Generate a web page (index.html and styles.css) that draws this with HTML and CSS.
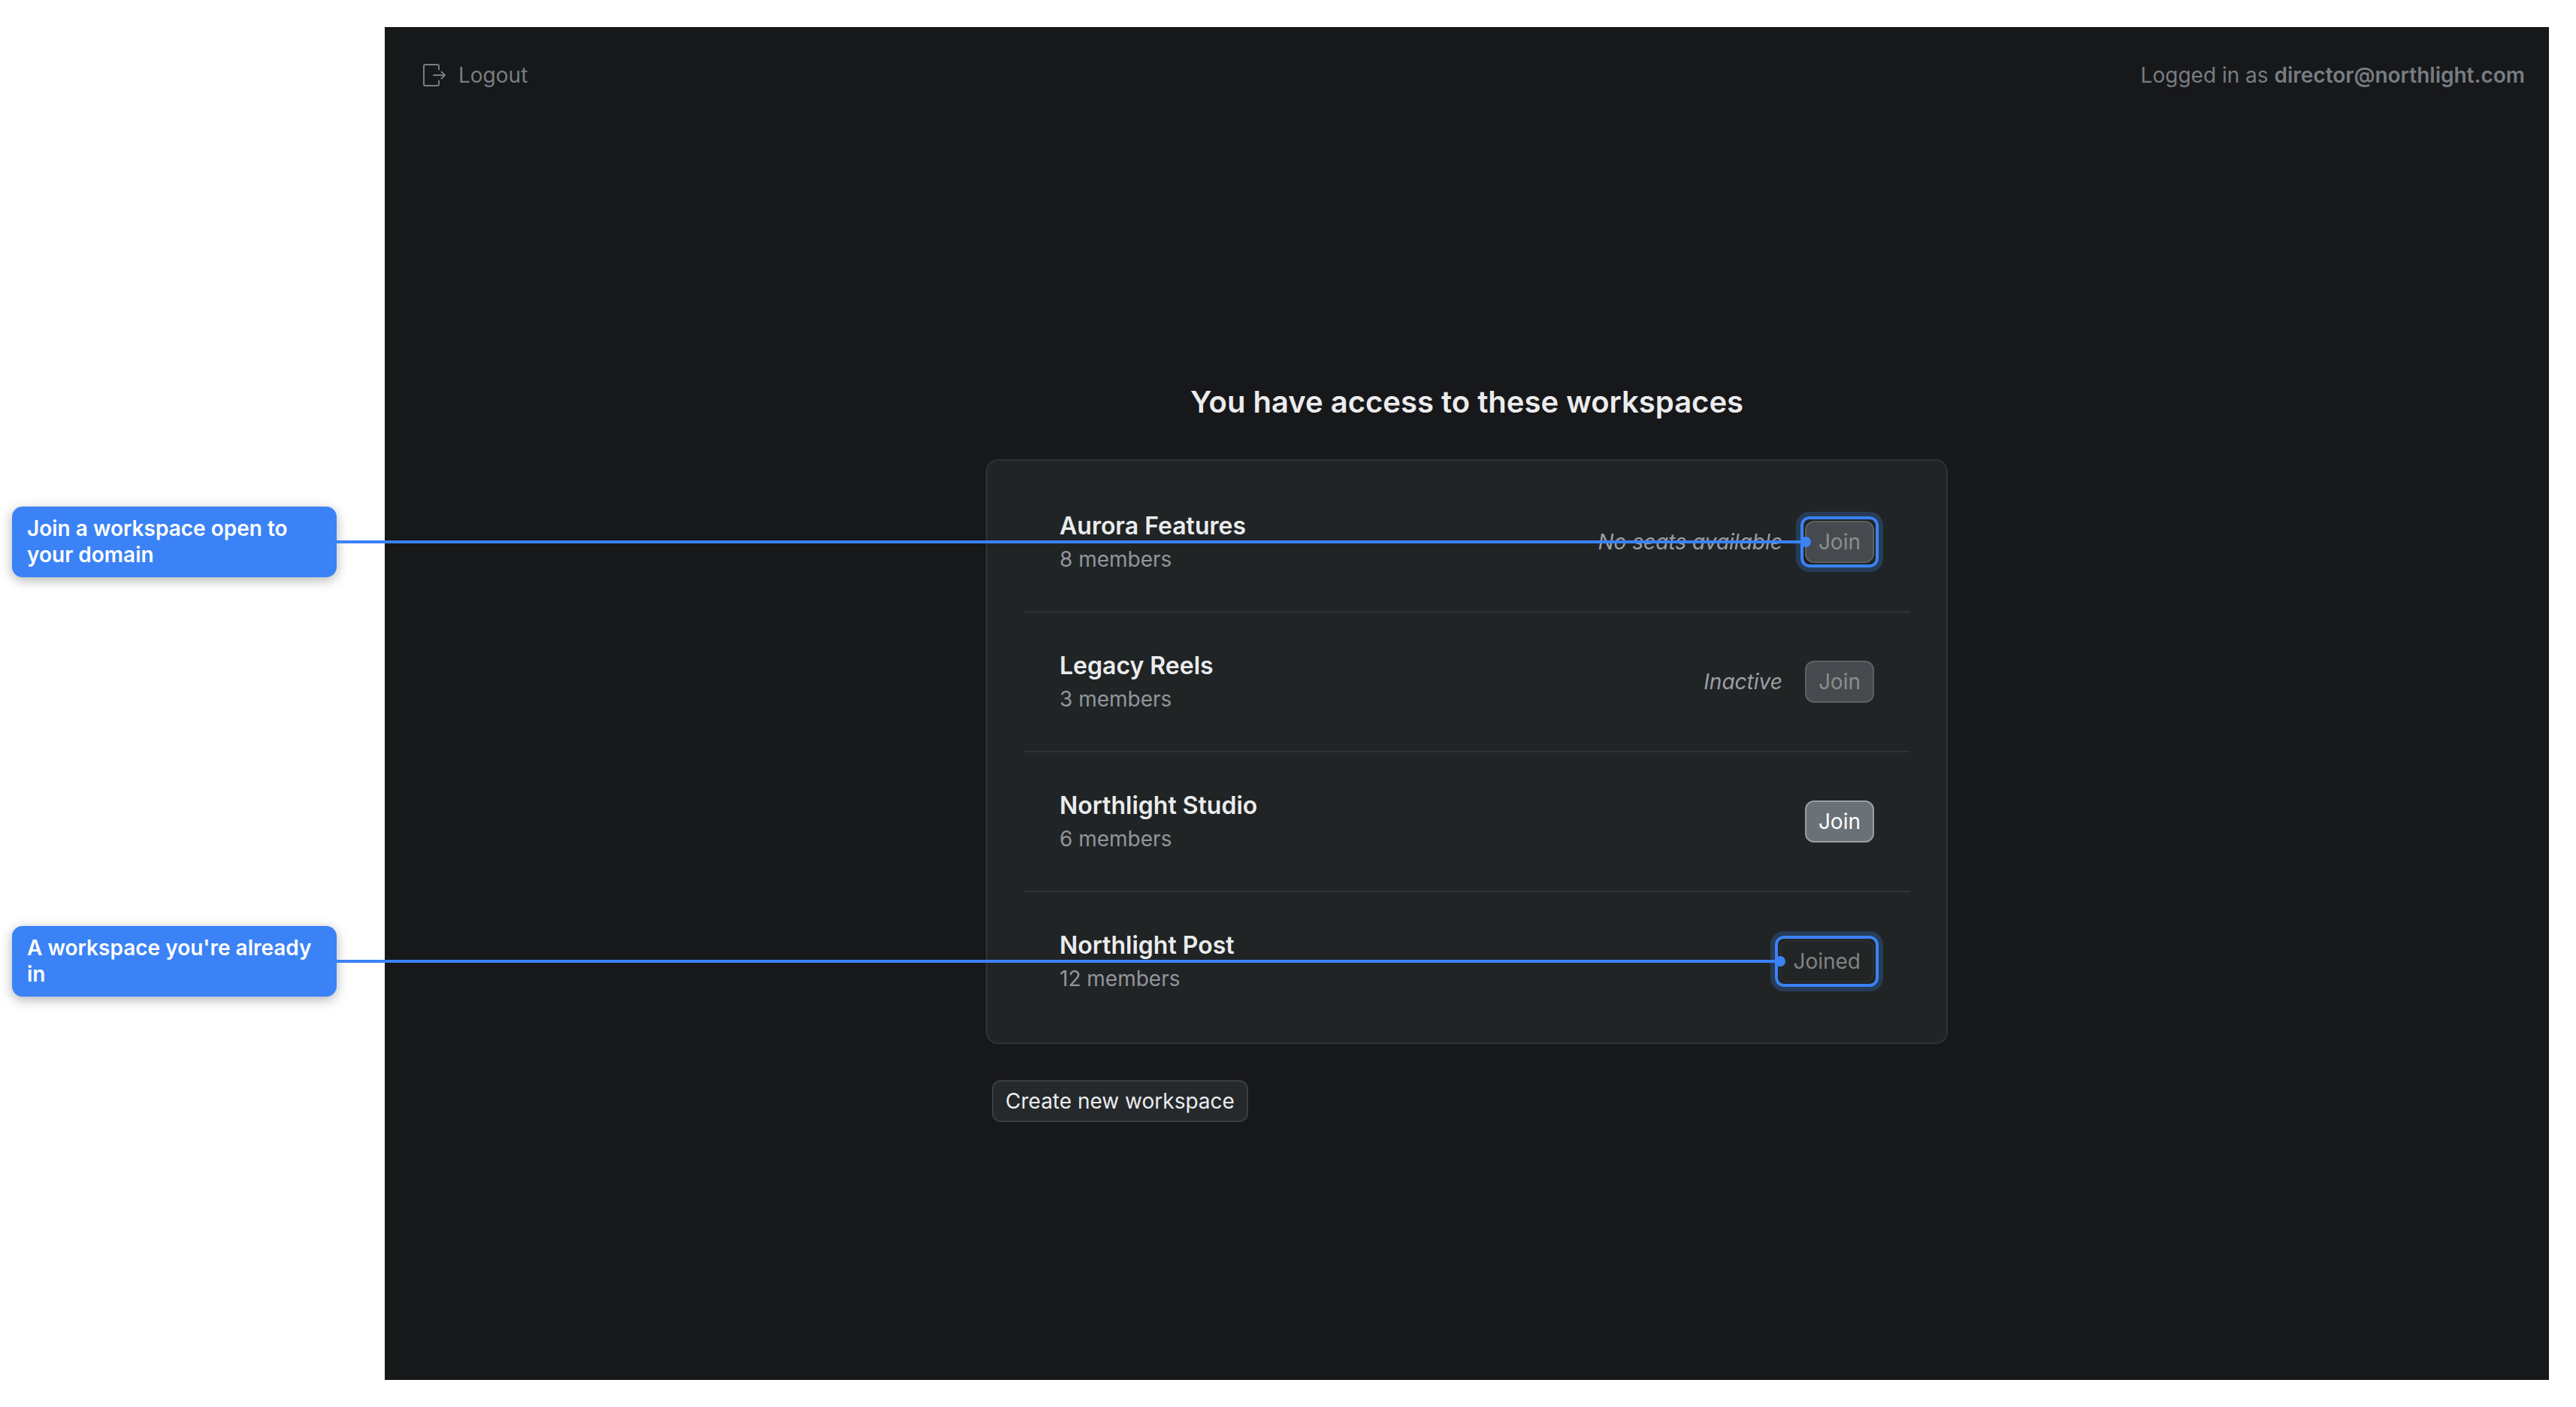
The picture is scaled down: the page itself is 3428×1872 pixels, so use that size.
FILE: index.html
```html
<!DOCTYPE html>
<html lang="en">
<head>
  <meta charset="UTF-8" />
  <meta name="viewport" content="width=device-width, initial-scale=1" />
  <title>Workspaces</title>
  <link rel="stylesheet" href="styles.css">
</head>
<body>

  <div class="app">
    <header class="topbar">
      <button type="button" class="logout">
        <svg class="logout-icon" viewBox="0 0 32 32" aria-hidden="true">
          <path d="M22 8.500V4a2 2 0 0 0-2-2H4a2 2 0 0 0-2 2v24a2 2 0 0 0 2 2h16a2 2 0 0 0 2-2v-4.500" />
          <path d="M15 16h15M25.500 11.500l4.500 4.500-4.500 4.500" />
        </svg>
        Logout
      </button>
      <p class="user">Logged in as <strong>director@northlight.com</strong></p>
    </header>

    <main class="content">
      <h1>You have access to these workspaces</h1>

      <ul class="workspaces">
        <li class="workspace">
          <div class="info">
            <h2>Aurora Features</h2>
            <p>8 members</p>
          </div>
          <em class="status">No seats available</em>
          <button type="button" class="btn btn-join ringed" disabled>Join</button>
          <div class="callout callout-join">
            <span class="callout-label">Join a workspace open to your domain</span>
            <span class="callout-line"></span>
          </div>
        </li>
        <li class="workspace">
          <div class="info">
            <h2>Legacy Reels</h2>
            <p>3 members</p>
          </div>
          <em class="status">Inactive</em>
          <button type="button" class="btn btn-join" disabled>Join</button>
        </li>
        <li class="workspace">
          <div class="info">
            <h2>Northlight Studio</h2>
            <p>6 members</p>
          </div>
          <button type="button" class="btn btn-join">Join</button>
        </li>
        <li class="workspace">
          <div class="info">
            <h2>Northlight Post</h2>
            <p>12 members</p>
          </div>
          <button type="button" class="btn btn-joined ringed" disabled>Joined</button>
          <div class="callout callout-joined">
            <span class="callout-label">A workspace you're already in</span>
            <span class="callout-line"></span>
          </div>
        </li>
      </ul>

      <button type="button" class="btn btn-create">Create new workspace</button>
    </main>
  </div>

</body>
</html>
```
FILE: styles.css
```css
* {
  box-sizing: border-box;
}
body {
  margin: 0;
  padding: 36px 36px 36px 512px;
  background: #fff;
  font-family: Inter, "Liberation Sans", sans-serif;
  font-size: 28px;
}
h1, h2, p, ul {
  margin: 0;
  padding: 0;
}
button {
  font: inherit;
}
.app {
  display: flex;
  flex-direction: column;
  min-height: calc(100vh - 72px);
  background: #17181a;
}

/* top bar */
.topbar {
  display: flex;
  align-items: center;
  justify-content: space-between;
  height: 128px;
  padding: 0 32px 0 50px;
  color: #777d82;
}
.logout {
  display: flex;
  align-items: center;
  gap: 16px;
  padding: 0;
  border: none;
  background: none;
  color: inherit;
}
.logout-icon {
  width: 32px;
  height: 32px;
  fill: none;
  stroke: currentColor;
  stroke-width: 2;
  stroke-linecap: round;
  stroke-linejoin: round;
}
.user strong {
  font-weight: 600;
}

/* workspace list */
.content {
  flex: 1;
  display: flex;
  flex-direction: column;
  justify-content: center;
  width: 1280px;
  max-width: 100%;
  margin: 0 auto;
}
h1 {
  margin-bottom: 48px;
  color: #ebecee;
  font-size: 40px;
  font-weight: 600;
  line-height: 56px;
  text-align: center;
}
.workspaces {
  padding: 16px 48px;
  border: 2px solid #303335;
  border-radius: 16px;
  background: #212425;
  list-style: none;
}
.workspace {
  position: relative;
  display: flex;
  align-items: center;
  gap: 30px;
  padding: 48px;
}
.workspace + .workspace {
  border-top: 2px solid #303335;
}
.info {
  flex: 1;
}
.info h2 {
  color: #ebecee;
  font-size: 32px;
  font-weight: 600;
  line-height: 46px;
}
.info p {
  color: #91959c;
  line-height: 42px;
}
.status {
  color: #9b9fa6;
}

/* buttons */
.btn {
  position: relative;
  height: 56px;
  padding: 0 16px;
  border: 2px solid;
  border-radius: 12px;
}
.btn-join {
  background: #6a7177;
  border-color: #999ea2;
  color: #fff;
}
.btn-join:disabled {
  background: #464a4e;
  border-color: #5c6062;
  color: #8c8d8e;
}
.btn-joined {
  background: #222526;
  border-color: #2a2d2f;
  color: #808384;
}
.btn-create {
  align-self: flex-start;
  margin: 48px 0 0 8px;
  background: #25292c;
  border-color: #383e40;
  color: #ebecee;
}
.ringed::before {
  content: "";
  position: absolute;
  inset: -8px;
  border: 4px solid #3b82f6;
  border-radius: 12px;
  box-shadow: 0 0 0 6px rgba(59, 130, 246, 0.25);
}

/* callouts reach from the page margin to the ringed button */
.callout {
  position: absolute;
  z-index: 1;
  top: 50%;
  left: calc(368px - 50vw);
  display: flex;
  align-items: center;
  transform: translateY(-50%);
}
.callout-join {
  width: calc(50vw + 673px);
}
.callout-joined {
  width: calc(50vw + 639px);
}
.callout-label {
  width: 432px;
  padding: 12px 20px;
  border-radius: 14px;
  background: #3b82f6;
  box-shadow: 0 4px 16px rgba(0, 0, 0, 0.3);
  color: #fff;
  font-weight: 600;
  line-height: 35px;
}
.callout-line {
  position: relative;
  flex: 1;
  height: 4px;
  background: #3b82f6;
}
.callout-line::after {
  content: "";
  position: absolute;
  top: -5px;
  right: -7px;
  width: 14px;
  height: 14px;
  border-radius: 50%;
  background: #3b82f6;
}
```
